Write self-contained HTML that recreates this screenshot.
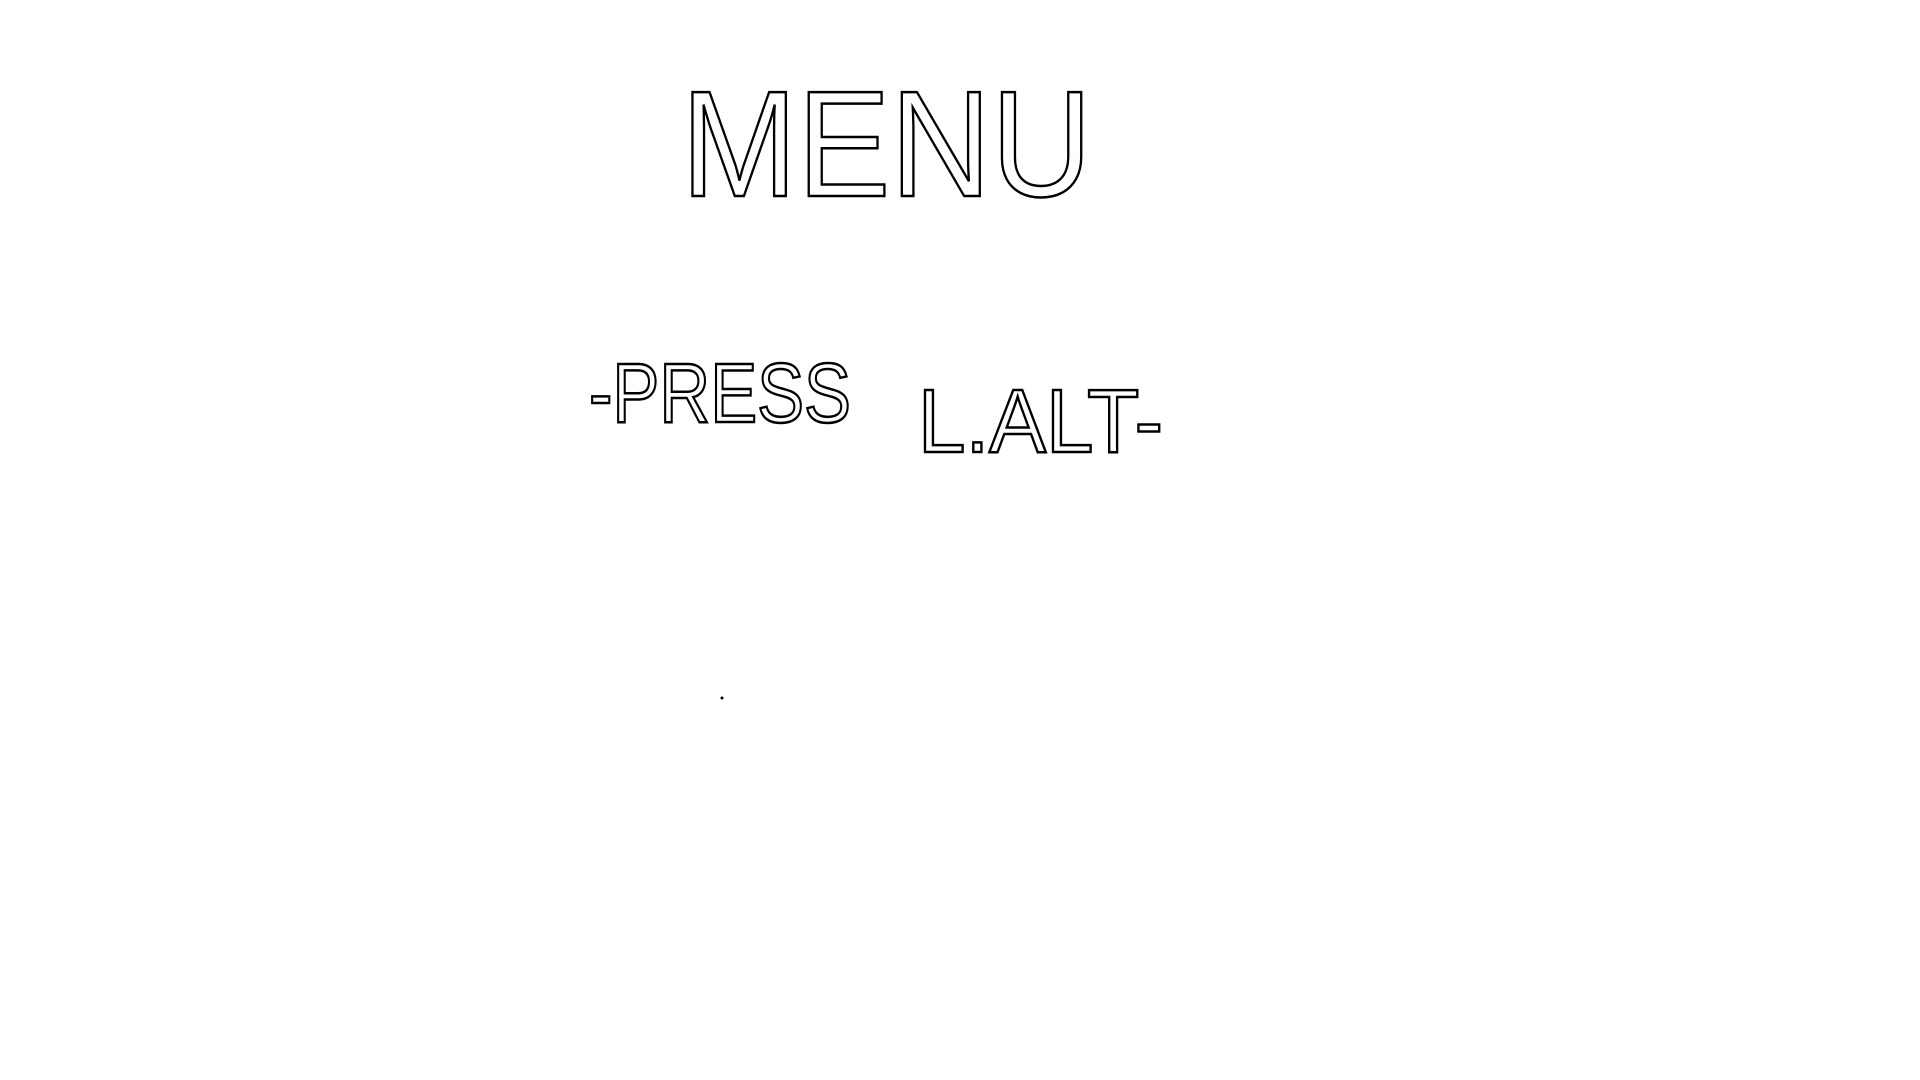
<!DOCTYPE html>
<html><head><meta charset="utf-8"><style>
html,body{margin:0;padding:0;background:#fff;width:1920px;height:1080px;overflow:hidden}
svg{display:block}
text{font-family:"Liberation Sans",sans-serif;fill:none;stroke:#000;stroke-width:2.5}
</style></head><body>
<svg width="1920" height="1080" viewBox="0 0 1920 1080">
<text x="681" y="196" font-size="151" textLength="411" lengthAdjust="spacingAndGlyphs">MENU</text>
<text x="589" y="422" font-size="84" textLength="262" lengthAdjust="spacingAndGlyphs">-PRESS</text>
<text x="918" y="452" font-size="90" textLength="245" lengthAdjust="spacingAndGlyphs">L.ALT-</text>
<circle cx="722" cy="698" r="1.5" fill="#000"/>
</svg>
</body></html>
